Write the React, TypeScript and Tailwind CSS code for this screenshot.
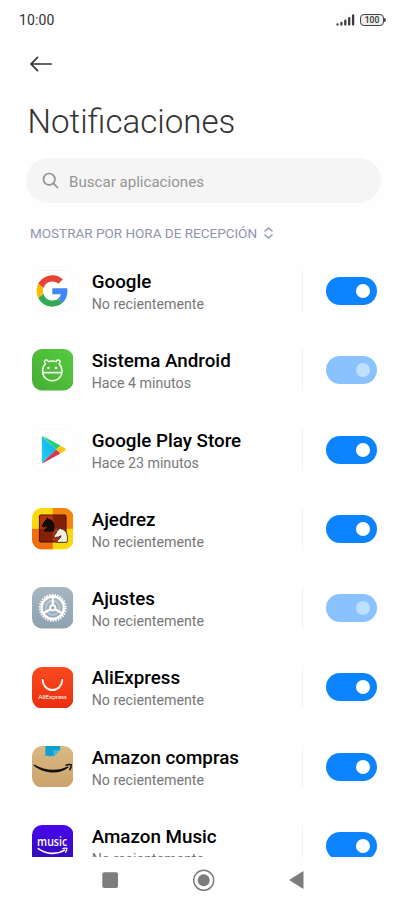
import type { ReactNode } from "react";

function GoogleIcon() {
  return (
    <svg viewBox="0 0 42 42" className="h-full w-full">
      <rect x="0.5" y="0.5" width="41" height="41" rx="9.5" fill="#fff" stroke="#f7f7f7" />
      <g transform="translate(4.600 5.200) scale(.665)">
        <path fill="#EA4335" d="M24 9.5c3.54 0 6.71 1.22 9.21 3.6l6.85-6.85C35.9 2.38 30.47 0 24 0 14.62 0 6.51 5.38 2.56 13.22l7.98 6.19C12.43 13.72 17.74 9.5 24 9.5z" />
        <path fill="#4285F4" d="M46.98 24.55c0-1.57-.15-3.09-.38-4.55H24v9.02h12.94c-.58 2.96-2.26 5.48-4.78 7.18l7.73 6c4.51-4.18 7.09-10.36 7.09-17.65z" />
        <path fill="#FBBC05" d="M10.53 28.59c-.48-1.45-.76-2.99-.76-4.59s.27-3.14.76-4.59l-7.98-6.19C.92 16.46 0 20.12 0 24c0 3.88.92 7.54 2.56 10.78l7.97-6.19z" />
        <path fill="#34A853" d="M24 48c6.48 0 11.93-2.13 15.89-5.81l-7.73-6c-2.15 1.45-4.92 2.3-8.16 2.3-6.26 0-11.57-4.22-13.47-9.91l-7.98 6.19C6.51 42.62 14.62 48 24 48z" />
      </g>
    </svg>
  );
}

function AndroidSystemIcon() {
  return (
    <svg viewBox="0 0 42 42" className="h-full w-full">
      <defs>
        <linearGradient id="green" x1="0" y1="1" x2="1" y2="0">
          <stop offset="0" stopColor="#45ad33" />
          <stop offset="1" stopColor="#57cb3f" />
        </linearGradient>
      </defs>
      <rect width="42" height="42" rx="10" fill="url(#green)" />
      <g fill="none" stroke="#f3fff0" strokeWidth="1.5" strokeLinecap="round" strokeLinejoin="round">
        <path d="M13.700 14.800c-1.600-1-1.600-3.500.4-3.700 1.400-.1 2.200.7 2.500 1.700q3.900-1.500 7.800 0c.3-1 1.100-1.800 2.500-1.700 2 .2 2 2.700.4 3.700 2.100 2 3 4.300 3 7.400 0 5.800-4.100 9.900-9.800 9.900s-9.800-4.100-9.800-9.900c0-3.100.9-5.400 3-7.400Z" />
        <path d="M11 23.900h19" strokeWidth="1.700" />
      </g>
      <circle cx="16.700" cy="19.200" r="1.300" fill="#fff" />
      <circle cx="24.300" cy="19.200" r="1.300" fill="#fff" />
    </svg>
  );
}

function PlayStoreIcon() {
  return (
    <svg viewBox="0 0 42 42" className="h-full w-full">
      <defs>
        <linearGradient id="play" x1="1" y1="0" x2="0" y2="1">
          <stop offset="0" stopColor="#10a8e8" />
          <stop offset="1" stopColor="#20d4f2" />
        </linearGradient>
      </defs>
      <rect x="0.5" y="0.5" width="41" height="41" rx="9.5" fill="#fff" stroke="#f8f8f8" />
      <g transform="translate(-.6 -.8)">
        <path d="M10.800 8.300Q10.600 8.500 10.600 9.100v24.800q0 .8.400 1.200L25.200 21.500Z" fill="url(#play)" />
        <path d="M10.900 8.200q.5-.4 1.400.1l17 9.200-4.100 4Z" fill="#20d177" />
        <path d="M10.900 35.100q.5.400 1.400-.1l17-9.400-4.100-4.100Z" fill="#d8344d" />
        <path d="m29.300 17.500 4.300 2.500q2.300 1.500 0 3l-4.300 2.600-4.100-4.100Z" fill="#fec615" />
      </g>
    </svg>
  );
}

const knight =
  "M3 16.500h10.500c.5-3.500.8-7-.8-9.800C11.500 4.600 9.700 3.200 7.400 3L6.200 1.300 5.500 3.400C3.600 4.300 2.800 5.600 2.400 7.200L.5 9.900c-.4 1.200.6 2.300 1.700 1.900l1.500-.8.500.6 3.200-1.800C7.200 12.600 3.800 13.500 3 16.500Z";

function ChessIcon() {
  return (
    <svg viewBox="0 0 42 42" className="h-full w-full">
      <defs>
        <clipPath id="chess-shape">
          <rect width="42" height="42" rx="10" />
        </clipPath>
      </defs>
      <g clipPath="url(#chess-shape)">
        <rect width="42" height="42" fill="#fbd80c" />
        <rect y="21" width="21" height="21" fill="#f26c10" />
        <rect x="21" width="21" height="21" fill="#f58410" />
        <rect x="7" y="6.500" width="28" height="28.500" rx="2" fill="#571607" />
        <rect x="8.200" y="7.700" width="25.600" height="26" rx="1" fill="#822009" />
        <rect x="8.200" y="7.700" width="12.800" height="13.300" fill="#b8360f" />
        <rect x="21" y="21" width="12.800" height="12.700" fill="#b3320f" />
        <path transform="translate(10 8.800) scale(.88)" d={knight} fill="#130d0a" stroke="#000" />
        <path transform="translate(22 18.200)" d={knight} fill="#f3f1df" stroke="#27170e" strokeWidth=".8" />
      </g>
    </svg>
  );
}

function SettingsIcon() {
  return (
    <svg viewBox="0 0 42 42" className="h-full w-full">
      <defs>
        <linearGradient id="slate" x1="0" y1="0" x2="0" y2="1">
          <stop offset="0" stopColor="#a6b7c2" />
          <stop offset="1" stopColor="#8ea1af" />
        </linearGradient>
      </defs>
      <rect width="42" height="42" rx="10" fill="url(#slate)" />
      <g fill="none" stroke="#fff">
        <circle cx="21" cy="21" r="13.200" strokeWidth="2" strokeDasharray="1.500 1.264" />
        <circle cx="21" cy="21" r="11.300" strokeWidth="2.500" />
        <circle cx="21" cy="21" r="7" strokeWidth="2.600" opacity=".28" />
        <circle cx="21" cy="21" r="2.700" strokeWidth="1.900" />
        <path d="M21 18V9.500M18.500 22.500l-7.400 4.300M23.500 22.500l7.400 4.300" strokeWidth="2.300" />
      </g>
    </svg>
  );
}

function AliExpressIcon() {
  return (
    <svg viewBox="0 0 42 42" className="h-full w-full">
      <defs>
        <linearGradient id="ali" x1="0" y1="0" x2="0" y2="1">
          <stop offset="0" stopColor="#fb4a1f" />
          <stop offset="1" stopColor="#ea2f0e" />
        </linearGradient>
      </defs>
      <rect width="42" height="42" rx="10" fill="url(#ali)" />
      <circle cx="10.700" cy="12.600" r="1.400" fill="#b52009" />
      <circle cx="30.700" cy="12.600" r="1.400" fill="#b52009" />
      <path d="M10.700 13c.4 6.200 4.600 10.300 10 10.300s9.600-4.100 10-10.300" fill="none" stroke="#fff3ed" strokeWidth="2" strokeLinecap="round" />
      <text x="20.700" y="32.800" textAnchor="middle" textLength="29" lengthAdjust="spacingAndGlyphs" fontSize="6.600" fill="#fff" fontFamily="Lato, sans-serif">
        AliExpress
      </text>
    </svg>
  );
}

function AmazonIcon() {
  return (
    <svg viewBox="0 0 42 42" className="h-full w-full">
      <defs>
        <linearGradient id="parcel" x1="0" y1="0" x2="0" y2="1">
          <stop offset="0" stopColor="#dbb982" />
          <stop offset="1" stopColor="#caa36c" />
        </linearGradient>
      </defs>
      <rect width="42" height="42" rx="10" fill="url(#parcel)" />
      <path d="M13.500 0H28.500v3.700L22 10.500 20.300 9.800l-2.500.8-2-.9-2.300.6Z" fill="#149fd2" />
      <path d="M28.500 3.700 22 10.500 21.500 4.500q3.500.4 7-.8Z" fill="#45bbe3" />
      <path d="M2.200 18.800C13.200 25.300 26.700 25.700 36.300 20.500l.9 1C28.200 29.400 11.700 28.300 1.700 19.700q-.3-1.100.5-.9Z" fill="#14110d" />
      <path d="M34 19.500q3-1.100 5.700-.5.300 2.700-1.700 5.500" fill="none" stroke="#14110d" strokeWidth="1.500" />
    </svg>
  );
}

function AmazonMusicIcon() {
  return (
    <svg viewBox="0 0 42 42" className="h-full w-full">
      <defs>
        <linearGradient id="music" x1="0" y1="0" x2="0" y2="1">
          <stop offset="0" stopColor="#4806ed" />
          <stop offset="1" stopColor="#300cad" />
        </linearGradient>
      </defs>
      <rect width="42" height="42" rx="10" fill="url(#music)" />
      <text x="20.400" y="21.500" textAnchor="middle" textLength="30.500" lengthAdjust="spacingAndGlyphs" fontSize="12.500" fontWeight="600" fill="#fff" fontFamily="'Open Sans', sans-serif">
        music
      </text>
      <path d="M6.400 23.800c8.300 6 18.700 6.500 26.500 1.700" fill="none" stroke="#fff" strokeWidth="1.600" strokeLinecap="round" />
      <path d="M30.700 23.800q2.600-.8 4.600-.2.100 2.400-1.600 4.400" fill="none" stroke="#fff" strokeWidth="1.300" />
    </svg>
  );
}

type AppEntry = {
  name: string;
  time: string;
  icon: ReactNode;
  locked?: boolean;
};

const apps: AppEntry[] = [
  { name: "Google", time: "No recientemente", icon: <GoogleIcon /> },
  { name: "Sistema Android", time: "Hace 4 minutos", icon: <AndroidSystemIcon />, locked: true },
  { name: "Google Play Store", time: "Hace 23 minutos", icon: <PlayStoreIcon /> },
  { name: "Ajedrez", time: "No recientemente", icon: <ChessIcon /> },
  { name: "Ajustes", time: "No recientemente", icon: <SettingsIcon />, locked: true },
  { name: "AliExpress", time: "No recientemente", icon: <AliExpressIcon /> },
  { name: "Amazon compras", time: "No recientemente", icon: <AmazonIcon /> },
  { name: "Amazon Music", time: "No recientemente", icon: <AmazonMusicIcon /> },
];

function Toggle({ locked }: { locked?: boolean }) {
  return (
    <button
      role="switch"
      aria-checked="true"
      disabled={locked}
      className={`flex h-7 w-[51px] items-center justify-end rounded-full pr-[7px] ${
        locked ? "bg-[#8ac2ff]" : "bg-[#0d84ff]"
      }`}
    >
      <span className={`h-3.5 w-3.5 rounded-full ${locked ? "bg-[#bfdfff]" : "bg-white"}`} />
    </button>
  );
}

function AppRow({ app }: { app: AppEntry }) {
  return (
    <li className="flex h-[79.300px] shrink-0 items-center pr-[30px] pl-[31.600px]">
      <div className="h-[41.500px] w-[41.500px] shrink-0">{app.icon}</div>
      <div className="ml-[18.600px] flex-1 pt-0.5 whitespace-nowrap">
        <h2 className="text-[18.800px] leading-6 font-medium text-black">{app.name}</h2>
        <p className="text-[14.200px] leading-5 text-[#787878]">{app.time}</p>
      </div>
      <div className="mr-[23px] h-[42px] w-px bg-[#f2f2f2]" />
      <Toggle locked={app.locked} />
    </li>
  );
}

export default function App() {
  return (
    <div className="flex h-[906px] w-[407px] flex-col overflow-hidden bg-[#fefefe] font-[Roboto,sans-serif]">
      <header className="flex h-10 shrink-0 items-center justify-between pr-[21px] pl-[19px]">
        <span className="pt-px text-[14px] tracking-[0.150px] text-[#333]">10:00</span>
        <div className="flex items-center gap-[5px]">
          <svg width="19" height="12" viewBox="0 0 19 12" fill="none" stroke="#3c3c3c" strokeWidth="2.300" strokeLinecap="round">
            <path d="M1.500 10.400v.2M5.400 9v1.600M9.300 6.700v3.900M13.200 4.200v6.400M17.100 1.500v9.100" />
          </svg>
          <div className="flex items-center">
            <span className="flex h-[12px] w-6 items-center justify-center rounded-[4px] border border-[#444] bg-[#eee] text-[8.500px] leading-none font-medium text-[#333]">
              100
            </span>
            <span className="h-[4px] w-[2px] rounded-r-full bg-[#4a4a4a]" />
          </div>
        </div>
      </header>

      <div className="flex h-12 shrink-0 items-center pl-[30px]">
        <button aria-label="Atrás">
          <svg width="23" height="16" viewBox="0 0 23 16" fill="none" stroke="#333" strokeWidth="1.700" strokeLinecap="round" strokeLinejoin="round">
            <path d="M7.500 1.300 1 8l6.500 6.700M1.200 8h20" />
          </svg>
        </button>
      </div>

      <h1 className="h-[70px] shrink-0 pl-[27.500px] text-[33.100px] leading-[67px] font-light text-[#333]">
        Notificaciones
      </h1>

      <div className="mx-[26px] flex h-[45px] shrink-0 items-center gap-[10px] rounded-full bg-[#f5f5f5] pl-4">
        <svg width="17" height="17" viewBox="0 0 17 17" fill="none" stroke="#919191" strokeWidth="1.700" strokeLinecap="round">
          <circle cx="7.200" cy="7.200" r="5.700" />
          <path d="m11.400 11.400 4.100 4.100" />
        </svg>
        <span className="pt-[3px] text-[15.100px] text-[#949494]">Buscar aplicaciones</span>
      </div>

      <div className="flex h-[48.300px] shrink-0 items-center gap-[7px] pt-[12.500px] pl-[30px] text-[#9093b1]">
        <span className="text-[13.500px]">MOSTRAR POR HORA DE RECEPCIÓN</span>
        <svg width="9" height="12" viewBox="0 0 9 12" fill="none" stroke="currentColor" strokeWidth="1.400" strokeLinecap="round" strokeLinejoin="round">
          <path d="m1 4 3.500-3L8 4M1 8l3.500 3L8 8" />
        </svg>
      </div>

      <ul className="flex min-h-0 flex-1 flex-col overflow-hidden">
        {apps.map((app) => (
          <AppRow key={app.name} app={app} />
        ))}
      </ul>

      <nav className="flex h-[49px] shrink-0 items-start gap-[75px] pt-[11px] pl-[102px]">
        <svg width="16" height="24" viewBox="0 0 16 24">
          <rect x=".3" y="4.300" width="15.700" height="15.700" rx="2" fill="#7d7d7d" />
        </svg>
        <svg width="22" height="24" viewBox="0 0 22 24">
          <circle cx="10.700" cy="12.300" r="10" fill="none" stroke="#7d7d7d" strokeWidth="1.500" />
          <circle cx="10.700" cy="12.300" r="6" fill="#7d7d7d" />
        </svg>
        <svg width="15" height="24" viewBox="0 0 15 24" className="-ml-px">
          <path d="M14.500 3v18L0 12Z" fill="#7d7d7d" />
        </svg>
      </nav>
    </div>
  );
}
